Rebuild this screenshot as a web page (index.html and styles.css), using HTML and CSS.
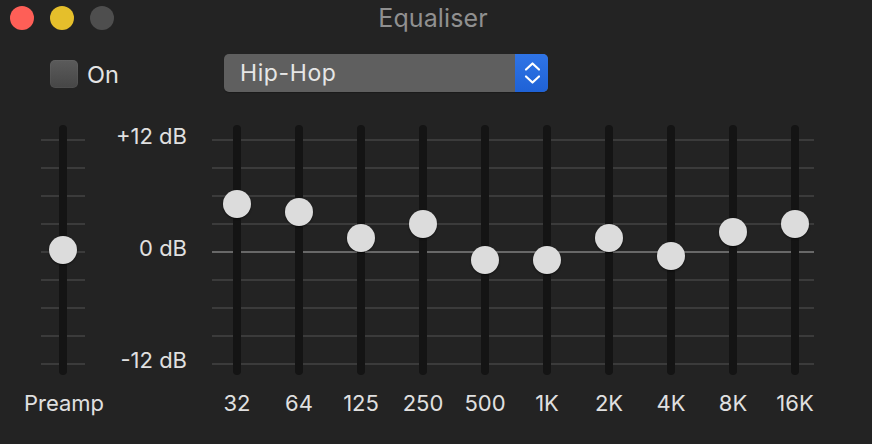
FILE: index.html
```html
<!DOCTYPE html>
<html>
<head>
<meta charset="utf-8">
<title>Equaliser</title>
<link rel="stylesheet" href="styles.css">
</head>
<body>
<div class="window">
  <header class="titlebar">
    <div class="lights">
      <span class="light red"></span>
      <span class="light yellow"></span>
      <span class="light grey"></span>
    </div>
    <div class="title">Equaliser</div>
    <div></div>
  </header>

  <div class="controls">
    <div class="toggle">
      <span class="checkbox"></span>
      <span class="toggle-label">On</span>
    </div>
    <div class="select">
      <span class="select-value">Hip-Hop</span>
      <span class="select-arrows">
        <svg width="33" height="38" viewBox="0 0 33 38">
          <path d="M11 15.5 L17.5 9.5 L24 15.5" fill="none" stroke="#fff" stroke-width="2.2" stroke-linecap="round" stroke-linejoin="round"/>
          <path d="M11 22.5 L17.5 28.5 L24 22.5" fill="none" stroke="#fff" stroke-width="2.2" stroke-linecap="round" stroke-linejoin="round"/>
        </svg>
      </span>
    </div>
  </div>

  <div class="eq">
    <div class="preamp">
      <div class="slider preamp-slider">
        <div class="track"><div class="knob" style="top:111px"></div></div>
      </div>
      <div class="label">Preamp</div>
    </div>

    <div class="scale">
      <span>+12 dB</span>
      <span>0 dB</span>
      <span>-12 dB</span>
    </div>

    <div class="bands">
      <div class="slider band-row">
        <div class="band"><div class="track"><div class="knob" style="top:65px"></div></div></div>
        <div class="band"><div class="track"><div class="knob" style="top:73px"></div></div></div>
        <div class="band"><div class="track"><div class="knob" style="top:99px"></div></div></div>
        <div class="band"><div class="track"><div class="knob" style="top:85px"></div></div></div>
        <div class="band"><div class="track"><div class="knob" style="top:121px"></div></div></div>
        <div class="band"><div class="track"><div class="knob" style="top:121px"></div></div></div>
        <div class="band"><div class="track"><div class="knob" style="top:99px"></div></div></div>
        <div class="band"><div class="track"><div class="knob" style="top:117px"></div></div></div>
        <div class="band"><div class="track"><div class="knob" style="top:93px"></div></div></div>
        <div class="band"><div class="track"><div class="knob" style="top:85px"></div></div></div>
      </div>
      <div class="label-row">
        <span class="label">32</span>
        <span class="label">64</span>
        <span class="label">125</span>
        <span class="label">250</span>
        <span class="label">500</span>
        <span class="label">1K</span>
        <span class="label">2K</span>
        <span class="label">4K</span>
        <span class="label">8K</span>
        <span class="label">16K</span>
      </div>
    </div>
  </div>
</div>
</body>
</html>
```

FILE: styles.css
```css
* { box-sizing: border-box; }

html, body {
  margin: 0;
  padding: 0;
  background: #232323;
}

body {
  font-family: "Inter", "Roboto", "Liberation Sans", sans-serif;
  color: #e0e0e0;
}

.window {
  width: 872px;
  height: 444px;
  background: #232323;
  overflow: hidden;
}

/* Title bar */
.titlebar {
  height: 36px;
  display: grid;
  grid-template-columns: 1fr auto 1fr;
  align-items: center;
}

.lights {
  display: flex;
  gap: 16px;
  padding-left: 10px;
}

.light {
  width: 24px;
  height: 24px;
  border-radius: 50%;
  display: block;
}
.light.red { background: #fe5f57; }
.light.yellow { background: #e5bf2b; }
.light.grey { background: #4e4e4e; }

.title {
  font-size: 25px;
  color: #909090;
  letter-spacing: 0.1px;
  transform: translateX(-3px);
}

/* Controls */
.controls {
  margin-top: 18px;
  height: 38px;
  display: flex;
  align-items: center;
}

.toggle {
  width: 224px;
  padding-left: 50px;
  display: flex;
  align-items: center;
  gap: 9px;
  padding-top: 2px;
}

.checkbox {
  width: 28px;
  height: 28px;
  border-radius: 5px;
  background: linear-gradient(#5b5b5b, #464646);
  box-shadow: inset 0 0 0 1px rgba(255,255,255,0.04);
}

.toggle-label {
  font-size: 23.5px;
  color: #e4e4e4;
}

.select {
  width: 324px;
  height: 38px;
  border-radius: 5px;
  background: #5f5f5f;
  display: flex;
  align-items: center;
  overflow: hidden;
  box-shadow: 0 1px 1px rgba(0,0,0,0.25);
}

.select-value {
  flex: 1;
  padding-left: 16px;
  font-size: 23px;
  letter-spacing: 0.6px;
  color: #e6e6e6;
}

.select-arrows {
  width: 33px;
  height: 38px;
  background: linear-gradient(#2f74e6, #1f62d6);
  display: block;
}
.select-arrows svg { display: block; }

/* EQ */
.eq {
  margin-top: 33px;
  display: flex;
  align-items: flex-start;
}

.slider {
  height: 250px;
  background-image:
    linear-gradient(#686868, #686868),
    repeating-linear-gradient(to bottom, #3b3b3b 0 2px, transparent 2px 28px);
  background-repeat: no-repeat;
}

.preamp {
  margin-left: 23px;
  width: 80px;
  display: flex;
  flex-direction: column;
  align-items: center;
}

.preamp-slider {
  width: 44px;
  display: flex;
  justify-content: center;
  background-image:
    linear-gradient(#3b3b3b, #3b3b3b),
    repeating-linear-gradient(to bottom, #3b3b3b 0 2px, transparent 2px 28px);
  background-size: 44px 2px, 44px 226px;
  background-position: 0 126px, 0 14px;
}

.track {
  position: relative;
  width: 8px;
  height: 250px;
  border-radius: 4px;
  background: #141414;
}

.knob {
  position: absolute;
  left: -10px;
  width: 28px;
  height: 28px;
  border-radius: 50%;
  background: #dcdcdc;
  box-shadow: 0 1px 2px rgba(0,0,0,0.55);
}

.label {
  font-size: 22px;
  line-height: 22px;
  color: #e0e0e0;
  text-align: center;
}

.preamp .label {
  margin-top: 17px;
  padding-left: 2px;
}

.scale {
  width: 84px;
  height: 250px;
  padding-bottom: 4px;
  display: flex;
  flex-direction: column;
  justify-content: space-between;
  align-items: flex-end;
  font-size: 22px;
  line-height: 22px;
  color: #e0e0e0;
}

.bands {
  margin-left: 19px;
  width: 620px;
}

.band-row {
  display: flex;
  background-size: 602px 2px, 602px 226px;
  background-position: 6px 126px, 6px 14px;
}

.band {
  width: 62px;
  display: flex;
  justify-content: center;
}

.label-row {
  margin-top: 17px;
  display: flex;
}

.label-row .label {
  width: 62px;
}
```
